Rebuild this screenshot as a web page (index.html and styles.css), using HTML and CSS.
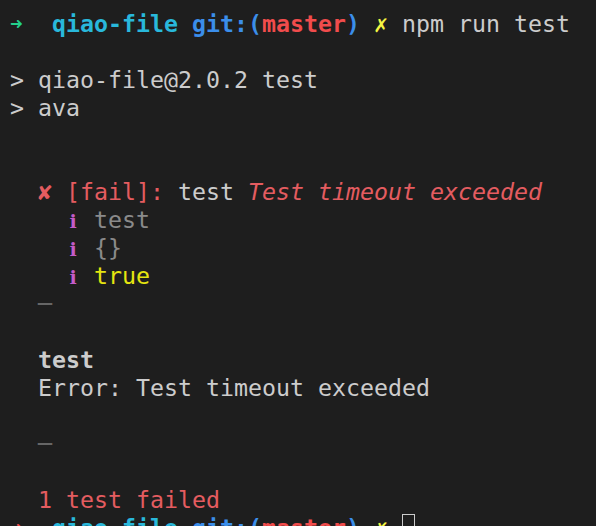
FILE: index.html
```html
<!DOCTYPE html>
<html>
<head>
<meta charset="utf-8">
<link rel="stylesheet" href="styles.css">
</head>
<body>
<div class="term">
<div class="ln"><span class="b green arrow">➜</span>  <span class="b cyan">qiao-file</span> <span class="b blue">git:(</span><span class="b red">master</span><span class="b blue">)</span> <span class="b yellow">✗</span> npm run test</div>
<div class="ln"> </div>
<div class="ln">&gt; qiao-file@2.0.2 test</div>
<div class="ln">&gt; ava</div>
<div class="ln"> </div>
<div class="ln"> </div>
<div class="ln">  <span class="fail">✘</span> <span class="fail">[fail]:</span> test <span class="fail it">Test timeout exceeded</span></div>
<div class="ln">    <span class="mag">i</span> <span class="gray">test</span></div>
<div class="ln">    <span class="mag">i</span> <span class="gray">{}</span></div>
<div class="ln">    <span class="mag">i</span> <span class="yel2">true</span></div>
<div class="ln">  <span class="dim">─</span></div>
<div class="ln"> </div>
<div class="ln">  <span class="b">test</span></div>
<div class="ln">  Error: Test timeout exceeded</div>
<div class="ln"> </div>
<div class="ln">  <span class="dim">─</span></div>
<div class="ln"> </div>
<div class="ln">  <span class="fail">1 test failed</span></div>
<div class="ln"><span class="b red arrow">➜</span>  <span class="b cyan">qiao-file</span> <span class="b blue">git:(</span><span class="b red">master</span><span class="b blue">)</span> <span class="b yellow">✗</span> <span class="cursor"> </span></div>
</div>
</body>
</html>
```
FILE: styles.css
```css
html, body {
  margin: 0;
  padding: 0;
  background: #1e1e1e;
  height: 100%;
  overflow: hidden;
}
.term {
  padding: 10px 10px;
  font-family: "DejaVu Sans Mono", monospace;
  font-size: 23.25px;
  line-height: 28px;
  color: #cccccc;
}
.ln {
  height: 28px;
  white-space: pre;
}
.b { font-weight: bold; }
.green { color: #23d18b; }
.cyan { color: #29b8db; }
.blue { color: #3b8eea; }
.red { color: #f14c4c; }
.yellow { color: #f5f543; }
.fail { color: #e45c60; }
.it { font-style: italic; }
.mag {
  color: #c45cc8;
  font-family: "DejaVu Serif", serif;
  font-weight: bold;
  font-size: 19px;
  display: inline-block;
  width: 14px;
  text-align: center;
}
.gray { color: #8a8a8a; }
.yel2 { color: #e5e510; }
.dim { color: #666666; }
.arrow {
  display: inline-block;
  width: 14px;
  font-size: 21px;
  vertical-align: top;
}
.cursor {
  display: inline-block;
  width: 13px;
  height: 27px;
  box-sizing: border-box;
  border: 1.5px solid #cccccc;
  vertical-align: top;
}
```
